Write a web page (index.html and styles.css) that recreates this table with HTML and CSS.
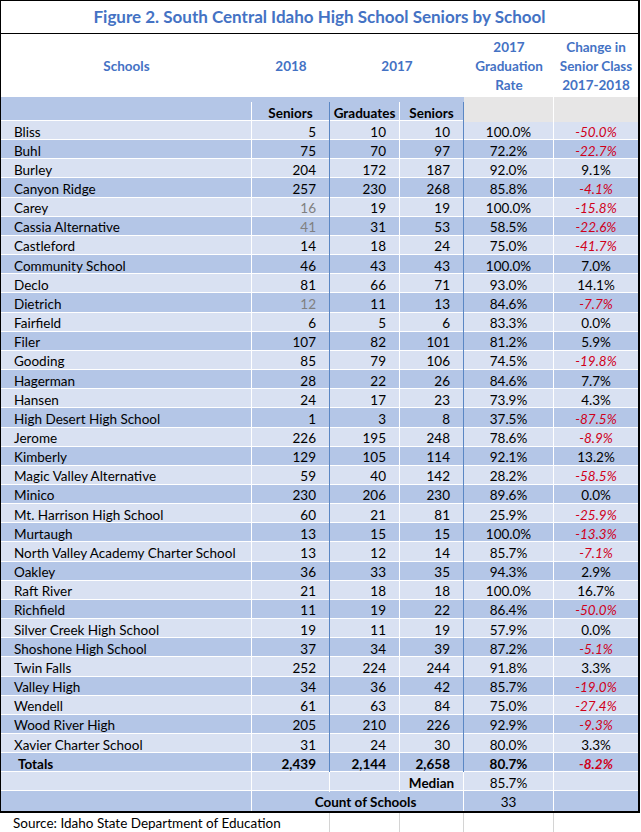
FILE: index.html
```html
<!DOCTYPE html>
<html>
<head>
<meta charset="utf-8">
<link rel="stylesheet" href="styles.css">
</head>
<body>
<div class="sheet">
  <div class="title">Figure 2. South Central Idaho High School Seniors by School</div>
  <div class="head">
    <div class="h">Schools</div>
    <div class="h">2018</div>
    <div class="h span2">2017</div>
    <div class="h">2017<br>Graduation<br>Rate</div>
    <div class="h">Change in<br>Senior Class<br>2017-2018</div>
  </div>
  <div class="row sub">
    <div class="c1"></div>
    <div class="c2 ctr b">Seniors</div>
    <div class="c3 ctr b">Graduates</div>
    <div class="c4 ctr b">Seniors</div>
    <div class="c5 gray"></div>
    <div class="c6 gray"></div>
  </div>
  <div class="row lt"><div class="c1">Bliss</div><div class="c2 n">5</div><div class="c3 n">10</div><div class="c4 n">10</div><div class="c5 ctr">100.0%</div><div class="c6 ctr neg">-50.0%</div></div>
  <div class="row dk"><div class="c1">Buhl</div><div class="c2 n">75</div><div class="c3 n">70</div><div class="c4 n">97</div><div class="c5 ctr">72.2%</div><div class="c6 ctr neg">-22.7%</div></div>
  <div class="row lt"><div class="c1">Burley</div><div class="c2 n">204</div><div class="c3 n">172</div><div class="c4 n">187</div><div class="c5 ctr">92.0%</div><div class="c6 ctr">9.1%</div></div>
  <div class="row dk"><div class="c1">Canyon Ridge</div><div class="c2 n">257</div><div class="c3 n">230</div><div class="c4 n">268</div><div class="c5 ctr">85.8%</div><div class="c6 ctr neg">-4.1%</div></div>
  <div class="row lt"><div class="c1">Carey</div><div class="c2 n dim">16</div><div class="c3 n">19</div><div class="c4 n">19</div><div class="c5 ctr">100.0%</div><div class="c6 ctr neg">-15.8%</div></div>
  <div class="row dk"><div class="c1">Cassia Alternative</div><div class="c2 n dim">41</div><div class="c3 n">31</div><div class="c4 n">53</div><div class="c5 ctr">58.5%</div><div class="c6 ctr neg">-22.6%</div></div>
  <div class="row lt"><div class="c1">Castleford</div><div class="c2 n">14</div><div class="c3 n">18</div><div class="c4 n">24</div><div class="c5 ctr">75.0%</div><div class="c6 ctr neg">-41.7%</div></div>
  <div class="row dk"><div class="c1">Community School</div><div class="c2 n">46</div><div class="c3 n">43</div><div class="c4 n">43</div><div class="c5 ctr">100.0%</div><div class="c6 ctr">7.0%</div></div>
  <div class="row lt"><div class="c1">Declo</div><div class="c2 n">81</div><div class="c3 n">66</div><div class="c4 n">71</div><div class="c5 ctr">93.0%</div><div class="c6 ctr">14.1%</div></div>
  <div class="row dk"><div class="c1">Dietrich</div><div class="c2 n dim">12</div><div class="c3 n">11</div><div class="c4 n">13</div><div class="c5 ctr">84.6%</div><div class="c6 ctr neg">-7.7%</div></div>
  <div class="row lt"><div class="c1">Fairfield</div><div class="c2 n">6</div><div class="c3 n">5</div><div class="c4 n">6</div><div class="c5 ctr">83.3%</div><div class="c6 ctr">0.0%</div></div>
  <div class="row dk"><div class="c1">Filer</div><div class="c2 n">107</div><div class="c3 n">82</div><div class="c4 n">101</div><div class="c5 ctr">81.2%</div><div class="c6 ctr">5.9%</div></div>
  <div class="row lt"><div class="c1">Gooding</div><div class="c2 n">85</div><div class="c3 n">79</div><div class="c4 n">106</div><div class="c5 ctr">74.5%</div><div class="c6 ctr neg">-19.8%</div></div>
  <div class="row dk"><div class="c1">Hagerman</div><div class="c2 n">28</div><div class="c3 n">22</div><div class="c4 n">26</div><div class="c5 ctr">84.6%</div><div class="c6 ctr">7.7%</div></div>
  <div class="row lt"><div class="c1">Hansen</div><div class="c2 n">24</div><div class="c3 n">17</div><div class="c4 n">23</div><div class="c5 ctr">73.9%</div><div class="c6 ctr">4.3%</div></div>
  <div class="row dk"><div class="c1">High Desert High School</div><div class="c2 n">1</div><div class="c3 n">3</div><div class="c4 n">8</div><div class="c5 ctr">37.5%</div><div class="c6 ctr neg">-87.5%</div></div>
  <div class="row lt"><div class="c1">Jerome</div><div class="c2 n">226</div><div class="c3 n">195</div><div class="c4 n">248</div><div class="c5 ctr">78.6%</div><div class="c6 ctr neg">-8.9%</div></div>
  <div class="row dk"><div class="c1">Kimberly</div><div class="c2 n">129</div><div class="c3 n">105</div><div class="c4 n">114</div><div class="c5 ctr">92.1%</div><div class="c6 ctr">13.2%</div></div>
  <div class="row lt"><div class="c1">Magic Valley Alternative</div><div class="c2 n">59</div><div class="c3 n">40</div><div class="c4 n">142</div><div class="c5 ctr">28.2%</div><div class="c6 ctr neg">-58.5%</div></div>
  <div class="row dk"><div class="c1">Minico</div><div class="c2 n">230</div><div class="c3 n">206</div><div class="c4 n">230</div><div class="c5 ctr">89.6%</div><div class="c6 ctr">0.0%</div></div>
  <div class="row lt"><div class="c1">Mt. Harrison High School</div><div class="c2 n">60</div><div class="c3 n">21</div><div class="c4 n">81</div><div class="c5 ctr">25.9%</div><div class="c6 ctr neg">-25.9%</div></div>
  <div class="row dk"><div class="c1">Murtaugh</div><div class="c2 n">13</div><div class="c3 n">15</div><div class="c4 n">15</div><div class="c5 ctr">100.0%</div><div class="c6 ctr neg">-13.3%</div></div>
  <div class="row lt"><div class="c1">North Valley Academy Charter School</div><div class="c2 n">13</div><div class="c3 n">12</div><div class="c4 n">14</div><div class="c5 ctr">85.7%</div><div class="c6 ctr neg">-7.1%</div></div>
  <div class="row dk"><div class="c1">Oakley</div><div class="c2 n">36</div><div class="c3 n">33</div><div class="c4 n">35</div><div class="c5 ctr">94.3%</div><div class="c6 ctr">2.9%</div></div>
  <div class="row lt"><div class="c1">Raft River</div><div class="c2 n">21</div><div class="c3 n">18</div><div class="c4 n">18</div><div class="c5 ctr">100.0%</div><div class="c6 ctr">16.7%</div></div>
  <div class="row dk"><div class="c1">Richfield</div><div class="c2 n">11</div><div class="c3 n">19</div><div class="c4 n">22</div><div class="c5 ctr">86.4%</div><div class="c6 ctr neg">-50.0%</div></div>
  <div class="row lt"><div class="c1">Silver Creek High School</div><div class="c2 n">19</div><div class="c3 n">11</div><div class="c4 n">19</div><div class="c5 ctr">57.9%</div><div class="c6 ctr">0.0%</div></div>
  <div class="row dk"><div class="c1">Shoshone High School</div><div class="c2 n">37</div><div class="c3 n">34</div><div class="c4 n">39</div><div class="c5 ctr">87.2%</div><div class="c6 ctr neg">-5.1%</div></div>
  <div class="row lt"><div class="c1">Twin Falls</div><div class="c2 n">252</div><div class="c3 n">224</div><div class="c4 n">244</div><div class="c5 ctr">91.8%</div><div class="c6 ctr">3.3%</div></div>
  <div class="row dk"><div class="c1">Valley High</div><div class="c2 n">34</div><div class="c3 n">36</div><div class="c4 n">42</div><div class="c5 ctr">85.7%</div><div class="c6 ctr neg">-19.0%</div></div>
  <div class="row lt"><div class="c1">Wendell</div><div class="c2 n">61</div><div class="c3 n">63</div><div class="c4 n">84</div><div class="c5 ctr">75.0%</div><div class="c6 ctr neg">-27.4%</div></div>
  <div class="row dk"><div class="c1">Wood River High</div><div class="c2 n">205</div><div class="c3 n">210</div><div class="c4 n">226</div><div class="c5 ctr">92.9%</div><div class="c6 ctr neg">-9.3%</div></div>
  <div class="row lt"><div class="c1">Xavier Charter School</div><div class="c2 n">31</div><div class="c3 n">24</div><div class="c4 n">30</div><div class="c5 ctr">80.0%</div><div class="c6 ctr">3.3%</div></div>
  <div class="row dk b"><div class="c1 tot">Totals</div><div class="c2 n">2,439</div><div class="c3 n">2,144</div><div class="c4 n">2,658</div><div class="c5 ctr">80.7%</div><div class="c6 ctr neg">-8.2%</div></div>
  <div class="row lt plain"><div class="c1"></div><div class="c2"></div><div class="c3"></div><div class="c4 ctr b">Median</div><div class="c5 ctr">85.7%</div><div class="c6"></div></div>
  <div class="row dk plain last"><div class="c1"></div><div class="c234 b">Count of Schools</div><div class="c5 ctr">33</div><div class="c6"></div></div>
</div>
<div class="source">
  <div class="s1">Source: Idaho State Department of Education</div>
  <div class="s2"></div>
  <div class="s3"></div>
  <div class="s4"></div>
  <div class="s5"></div>
  <div class="s6"></div>
</div>
</body>
</html>
```

FILE: styles.css
```css
html, body {
  margin: 0;
  padding: 0;
  background: #ffffff;
}
body {
  font-family: Lato, "Open Sans", "Liberation Sans", sans-serif;
  font-size: 13.5px;
  color: #000;
}
.sheet {
  width: 640px;
  box-sizing: border-box;
  border-top: 1px solid #000;
  border-left: 1px solid #000;
  border-right: 2px solid #000;
  border-bottom: 2px solid #000;
}
.title {
  height: 33px;
  box-sizing: border-box;
  border-bottom: 1px solid #000;
  color: #4472c4;
  font-weight: 700;
  font-size: 17px;
  text-align: center;
  line-height: 32px;
}
.head {
  display: grid;
  grid-template-columns: 251px 78px 134px 90px 84px;
  height: 63px;
  align-items: center;
  color: #4472c4;
  font-weight: 700;
  text-align: center;
  line-height: 19px;
  padding-top: 2px;
  box-sizing: border-box;
}
.row {
  display: grid;
  grid-template-columns: 251px 78px 70px 64px 90px 84px;
  height: 19.1667px;
  box-sizing: border-box;
  border-bottom: 1px solid #fff;
}
.row.last {
  border-bottom: none;
  grid-template-columns: 251px 212px 90px 84px;
}
.row.sub {
  height: 24px;
  background: #b4c6e7;
  padding-top: 5px;
}
.row > div {
  box-sizing: border-box;
  border-right: 1px solid #fff;
  line-height: 18px;
  padding-top: 1.5px;
  white-space: nowrap;
}
.row > div:last-child {
  border-right: none;
}
.row .c2, .row .c4 {
  border-right-color: #5b87c4;
}
.row.plain .c2, .row.plain .c4 {
  border-right-color: #fff;
}
.row.sub .gray {
  background: #e7e6e6;
  margin-top: -5px;
}
.lt { background: #d9e1f2; }
.dk { background: #b4c6e7; }
.c1 {
  padding-left: 13px;
}
.c1.tot { padding-left: 17px; }
.n {
  text-align: right;
  padding-right: 13px;
}
.ctr { text-align: center; }
.b { font-weight: 700; }
.dim { color: #808080; }
.neg {
  color: #d0001a;
  font-style: italic;
}
.c234 {
  text-align: center;
  padding-left: 16px;
}
.source {
  display: grid;
  grid-template-columns: 252px 78px 70px 64px 90px 84px;
  height: 19px;
}
.source > div {
  border-right: 1px solid #d4d4d4;
  white-space: nowrap;
  line-height: 19px;
  padding-top: 1px;
}
.source .s1 {
  padding-left: 13px;
  border-right: none;
  overflow: visible;
}
.source .s6 { border-right: none; }
```
